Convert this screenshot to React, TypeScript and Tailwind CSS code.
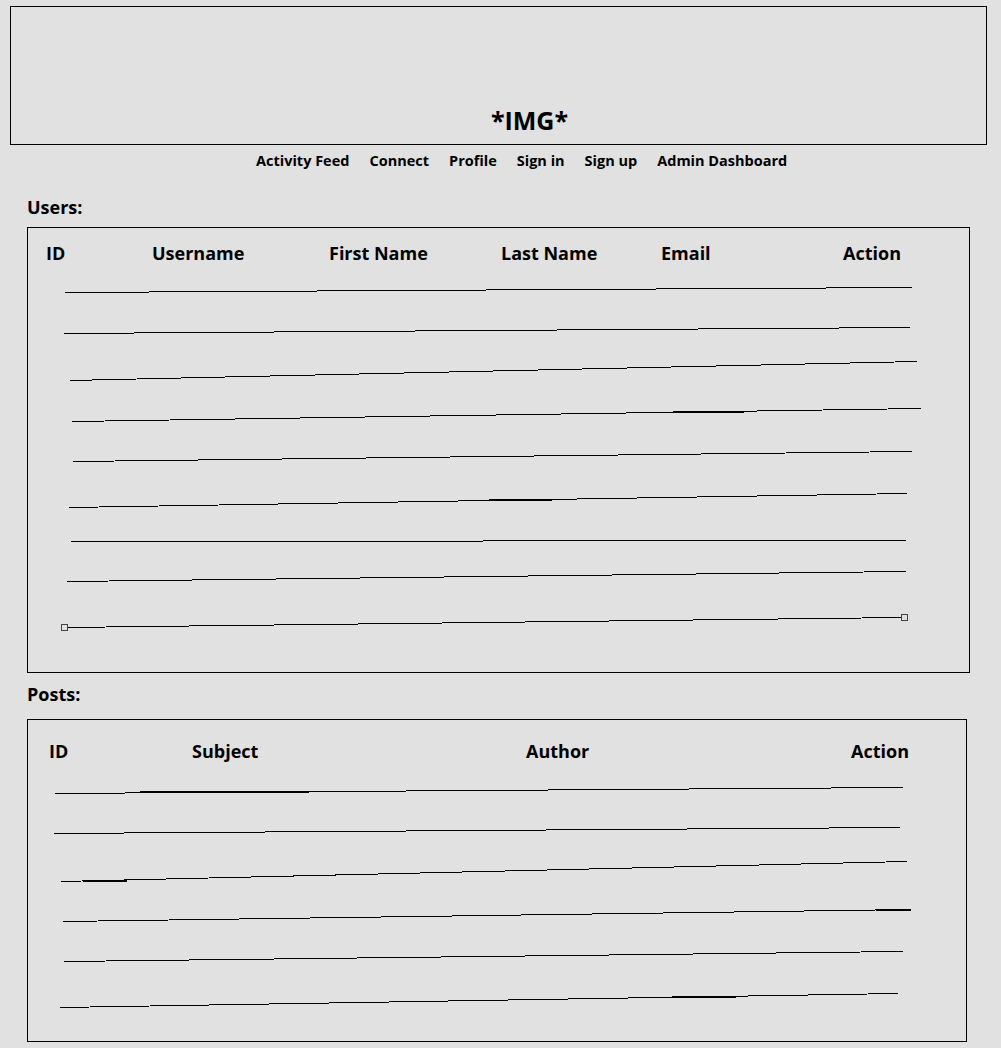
import React from "react";

type Seg = { x1: number; y1: number; x2: number; y2: number; w?: number };

// sketchy row separators, page coordinates
const userLines: Seg[] = [
  { x1: 65, y1: 292, x2: 912, y2: 287 },
  { x1: 64, y1: 333, x2: 910, y2: 327 },
  { x1: 70, y1: 380, x2: 917, y2: 361 },
  { x1: 72, y1: 421, x2: 921, y2: 408 },
  { x1: 673, y1: 411, x2: 744, y2: 411, w: 2 },
  { x1: 73, y1: 461, x2: 912, y2: 451 },
  { x1: 69, y1: 507, x2: 907, y2: 493 },
  { x1: 489, y1: 499, x2: 552, y2: 499, w: 2 },
  { x1: 71, y1: 541, x2: 906, y2: 540 },
  { x1: 67, y1: 581, x2: 906, y2: 571 },
  { x1: 64, y1: 627, x2: 904, y2: 617 },
];

const postLines: Seg[] = [
  { x1: 55, y1: 793, x2: 903, y2: 787 },
  { x1: 140, y1: 792, x2: 309, y2: 791, w: 2 },
  { x1: 54, y1: 833, x2: 900, y2: 827 },
  { x1: 61, y1: 881, x2: 907, y2: 861 },
  { x1: 83, y1: 880, x2: 127, y2: 880, w: 2 },
  { x1: 63, y1: 921, x2: 911, y2: 909 },
  { x1: 876, y1: 909, x2: 911, y2: 909, w: 2 },
  { x1: 64, y1: 961, x2: 903, y2: 951 },
  { x1: 60, y1: 1007, x2: 898, y2: 993 },
  { x1: 672, y1: 996, x2: 736, y2: 996, w: 2 },
];

function Lines({ segs, ox, oy, w, h, handles }: { segs: Seg[]; ox: number; oy: number; w: number; h: number; handles?: [number, number][] }) {
  return (
    <svg width={w} height={h} className="block" shapeRendering="crispEdges">
      <g transform={`translate(${-ox},${-oy})`}>
        {segs.map((s, i) => (
          <line key={i} x1={s.x1} y1={s.y1 + 0.5} x2={s.x2} y2={s.y2 + 0.5} stroke="#000" strokeWidth={s.w ?? 1} />
        ))}
        {handles?.map(([x, y], i) => (
          <rect key={i} x={x - 3 + 0.5} y={y - 3 + 0.5} width={6} height={6} fill="#e1e1e1" stroke="#444" strokeWidth={1} />
        ))}
      </g>
    </svg>
  );
}

const font = { fontFamily: '"Open Sans", "Noto Sans", sans-serif' };

export default function App() {
  return (
    <div className="w-full h-[1048px] overflow-hidden bg-[#e1e1e1] text-black pt-[6px]" style={font}>
      {/* Banner */}
      <div className="ml-[10px] w-[977px] h-[139px] border border-black flex items-end justify-center pl-[62px] pb-[11px]">
        <span className="text-[25px] leading-none font-bold">*IMG*</span>
      </div>

      {/* Nav */}
      <nav className="mt-[6px] h-[19px] flex gap-[20px] pl-[256px] text-[14.5px] leading-[20px] font-bold">
        <span>Activity Feed</span>
        <span>Connect</span>
        <span>Profile</span>
        <span>Sign in</span>
        <span>Sign up</span>
        <span>Admin Dashboard</span>
      </nav>

      {/* Users */}
      <h2 className="mt-[24px] ml-[27px] h-[27px] text-[18px] leading-[27px] font-bold">Users:</h2>
      <div className="mt-[6px] ml-[27px] w-[943px] h-[446px] border border-black flex flex-col">
        <div className="h-[44px] pt-[12px] pl-[18px] flex text-[18px] leading-[27px] font-bold">
          <span className="w-[106px]">ID</span>
          <span className="w-[177px]">Username</span>
          <span className="w-[172px]">First Name</span>
          <span className="w-[160px]">Last Name</span>
          <span className="w-[182px]">Email</span>
          <span>Action</span>
        </div>
        <Lines segs={userLines} ox={28} oy={272} w={941} h={399} handles={[[64, 627], [904, 617]]} />
      </div>

      {/* Posts */}
      <h2 className="mt-[8px] ml-[27px] h-[27px] text-[18px] leading-[27px] font-bold">Posts:</h2>
      <div className="mt-[11px] ml-[27px] w-[940px] h-[323px] border border-black flex flex-col">
        <div className="h-[55px] pt-[18px] pl-[21px] flex text-[18px] leading-[27px] font-bold">
          <span className="w-[143px]">ID</span>
          <span className="w-[334px]">Subject</span>
          <span className="w-[325px]">Author</span>
          <span>Action</span>
        </div>
        <Lines segs={postLines} ox={28} oy={775} w={938} h={265} />
      </div>
    </div>
  );
}
